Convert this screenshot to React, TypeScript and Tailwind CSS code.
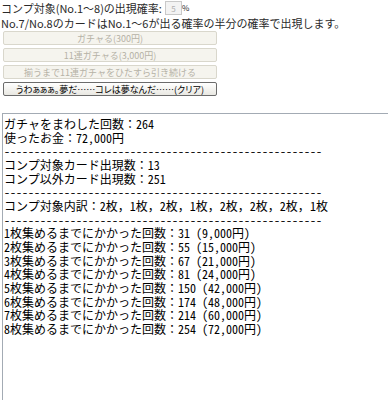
import React from 'react';

const DASH = '-'.repeat(53);

const lines = [
    'ガチャをまわした回数：264',
    '使ったお金：72,000円',
    DASH,
    'コンプ対象カード出現数：13',
    'コンプ以外カード出現数：251',
    DASH,
    'コンプ対象内訳：2枚，1枚，2枚，1枚，2枚，2枚，2枚，1枚',
    DASH,
    '1枚集めるまでにかかった回数：31 (9,000円)',
    '2枚集めるまでにかかった回数：55 (15,000円)',
    '3枚集めるまでにかかった回数：67 (21,000円)',
    '4枚集めるまでにかかった回数：81 (24,000円)',
    '5枚集めるまでにかかった回数：150 (42,000円)',
    '6枚集めるまでにかかった回数：174 (48,000円)',
    '7枚集めるまでにかかった回数：214 (60,000円)',
    '8枚集めるまでにかかった回数：254 (72,000円)',
];

// ascii runs get half-width glyphs, like a gothic monospace font
const Mono: React.FC<{ text: string }> = ({ text }) => (
    <>
        {text.split(/([\x20-\x7e]+)/).map((part, i) =>
            /^[\x20-\x7e]+$/.test(part)
                ? <span key={i} className="[font-feature-settings:'hwid']">{part}</span>
                : <span key={i}>{part}</span>
        )}
    </>
);

const GachaButton: React.FC<{ label: string; disabled?: boolean }> = ({ label, disabled }) => {
    if (disabled) {
        return (
            <button
                disabled
                className="h-[14px] w-full border border-[#d9d7cc] bg-[#f5f4ee] text-[9px] leading-none text-[#b5b2a6] rounded-[2px]"
            >
                {label}
            </button>
        );
    }
    return (
        <button className="h-[14px] w-full border border-[#6b6b6b] bg-gradient-to-b from-white to-[#e9e8e2] text-[9px] leading-none text-black rounded-[2px] [font-feature-settings:'palt']">
            {label}
        </button>
    );
};

export default function App() {
    return (
        <div className="h-[400px] w-[388px] overflow-hidden bg-white font-['Noto_Sans_CJK_JP',sans-serif] text-[#2a2a2a]">
            <div className="flex h-[16px] items-center pl-[1px] text-[11px] leading-none">
                <span>コンプ対象(No.1～8)の出現確率:</span>
                <input
                    disabled
                    value="5"
                    readOnly
                    className="ml-[3px] h-[14px] w-[17px] border border-[#c9c9c9] bg-[#f3f3f3] text-center text-[8px] text-[#b0b0b0]"
                />
                <span className="text-[8px]">%</span>
            </div>
            <div className="h-[14px] pl-[1px] text-[11px] leading-[14px]">
                No.7/No.8のカードはNo.1～6が出る確率の半分の確率で出現します。
            </div>
            <div className="ml-[3px] mt-[1px] flex w-[214px] flex-col gap-[3px]">
                <GachaButton label="ガチャる(300円)" disabled />
                <GachaButton label="11連ガチャる(3,000円)" disabled />
                <GachaButton label="揃うまで11連ガチャをひたすら引き続ける" disabled />
                <GachaButton label="うわぁぁぁ。夢だ……コレは夢なんだ……(クリア)" />
            </div>
            <div className="ml-[2px] mt-[17px] h-[320px] w-[420px] border border-[#a3abb4] px-[1px] pt-[3px] text-[12px] leading-[13.67px] text-black whitespace-pre">
                {lines.map((line, i) => (
                    <div key={i}><Mono text={line} /></div>
                ))}
            </div>
        </div>
    );
}
